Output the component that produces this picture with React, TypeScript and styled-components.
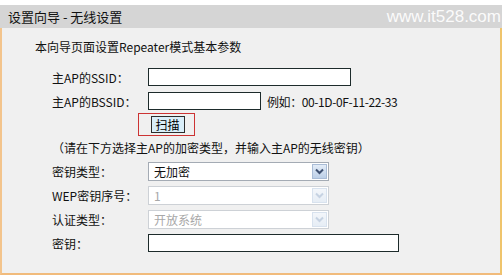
import React from "react";
import styled, { createGlobalStyle } from "styled-components";

const GlobalStyle = createGlobalStyle`
  html, body { margin: 0; padding: 0; background: #ffffff; }
  body { font-family: "Noto Sans CJK SC", "DejaVu Sans", sans-serif; color: #111; }
  * { box-sizing: border-box; }
`;

const Page = styled.div`
  width: 504px;
  height: 278px;
  overflow: hidden;
  padding-top: 5px;
`;

const Header = styled.div`
  width: 502px;
  height: 23px;
  background: #d5d5d5;
  display: flex;
  align-items: center;
  justify-content: space-between;
  padding: 0 1px 0 8px;
`;

const HeaderTitle = styled.span`
  font-size: 13px;
  line-height: 23px;
  color: #111;
`;

const Watermark = styled.span`
  font-family: "Liberation Sans", Arial, sans-serif;
  font-size: 17px;
  line-height: 23px;
  color: rgba(255, 255, 255, 0.92);
`;

const Body = styled.div`
  width: 502px;
  height: 247px;
  background: #f0f0f0;
  border-left: 2px solid #f3c48c;
  border-right: 2px solid #efc46c;
  border-bottom: 2px solid #f1bb7c;
  padding-top: 9px;
`;

const Intro = styled.div`
  padding-left: 33px;
  font-size: 12px;
  line-height: 20px;
`;

const Form = styled.div`
  margin-top: 8px;
  padding-left: 50px;
  display: flex;
  flex-direction: column;
`;

const Row = styled.div`
  display: flex;
  align-items: center;
  height: 24px;
`;

const Label = styled.span`
  width: 96px;
  font-size: 12px;
  color: #111;
`;

const TextInput = styled.div<{ $w: number }>`
  width: ${(p) => p.$w}px;
  height: 18px;
  background: #fff;
  border: 1px solid #1d2b2b;
`;

const Example = styled.span`
  margin-left: 6px;
  font-size: 12px;
  letter-spacing: -0.4px;
  color: #111;
`;

const ScanRow = styled.div`
  display: flex;
  align-items: flex-start;
  height: 23px;
  padding-left: 86px;
`;

const Highlight = styled.div`
  width: 57px;
  height: 23px;
  border: 1px solid #cc3333;
  display: flex;
  align-items: center;
  justify-content: center;
  padding-left: 2px;
`;

const ScanButton = styled.div`
  width: 34px;
  height: 17px;
  background: #d9eef9;
  border: 1px solid #2c2c2c;
  display: flex;
  align-items: center;
  justify-content: center;
  font-size: 12px;
  line-height: 13px;
  color: #000;
`;

const Hint = styled.div`
  height: 23px;
  display: flex;
  align-items: center;
  font-size: 12px;
  color: #111;
`;

const Select = styled.div<{ $disabled?: boolean }>`
  width: 181px;
  height: 19px;
  background: #fff;
  border: 1px solid ${(p) => (p.$disabled ? "#cdd1d6" : "#a4abb4")};
  display: flex;
  align-items: center;
  justify-content: space-between;
  padding: 1px;
`;

const SelectText = styled.span<{ $disabled?: boolean }>`
  padding-left: 4px;
  font-size: 12px;
  color: ${(p) => (p.$disabled ? "#a8a8a8" : "#111")};
`;

const Arrow = styled.span<{ $disabled?: boolean }>`
  width: 15px;
  height: 15px;
  display: flex;
  align-items: center;
  justify-content: center;
  border: 1px solid ${(p) => (p.$disabled ? "#d8e2ee" : "#a9bcd6")};
  background: ${(p) =>
    p.$disabled
      ? "linear-gradient(#f3f6fa, #e6edf5)"
      : "linear-gradient(#e3ecf7, #bccfe7)"};
`;

const Chevron = ({ disabled }: { disabled?: boolean }) => (
  <svg width="9" height="7" viewBox="0 0 9 7">
    <path
      d="M1 1.5 L4.5 5 L8 1.5"
      fill="none"
      stroke={disabled ? "#c6d2e2" : "#3f5172"}
      strokeWidth="2"
    />
  </svg>
);

const Dropdown = ({ value, disabled }: { value: string; disabled?: boolean }) => (
  <Select $disabled={disabled}>
    <SelectText $disabled={disabled}>{value}</SelectText>
    <Arrow $disabled={disabled}>
      <Chevron disabled={disabled} />
    </Arrow>
  </Select>
);

export default function App() {
  return (
    <>
      <GlobalStyle />
      <Page>
        <Header>
          <HeaderTitle>设置向导 - 无线设置</HeaderTitle>
          <Watermark>www.it528.com</Watermark>
        </Header>
        <Body>
          <Intro>本向导页面设置Repeater模式基本参数</Intro>
          <Form>
            <Row>
              <Label>主AP的SSID：</Label>
              <TextInput $w={203} />
            </Row>
            <Row>
              <Label>主AP的BSSID：</Label>
              <TextInput $w={113} />
              <Example>例如：00-1D-0F-11-22-33</Example>
            </Row>
            <ScanRow>
              <Highlight>
                <ScanButton>扫描</ScanButton>
              </Highlight>
            </ScanRow>
            <Hint>（请在下方选择主AP的加密类型，并输入主AP的无线密钥）</Hint>
            <Row>
              <Label>密钥类型：</Label>
              <Dropdown value="无加密" />
            </Row>
            <Row>
              <Label>WEP密钥序号：</Label>
              <Dropdown value="1" disabled />
            </Row>
            <Row>
              <Label>认证类型：</Label>
              <Dropdown value="开放系统" disabled />
            </Row>
            <Row>
              <Label>密钥：</Label>
              <TextInput $w={251} />
            </Row>
          </Form>
        </Body>
      </Page>
    </>
  );
}
